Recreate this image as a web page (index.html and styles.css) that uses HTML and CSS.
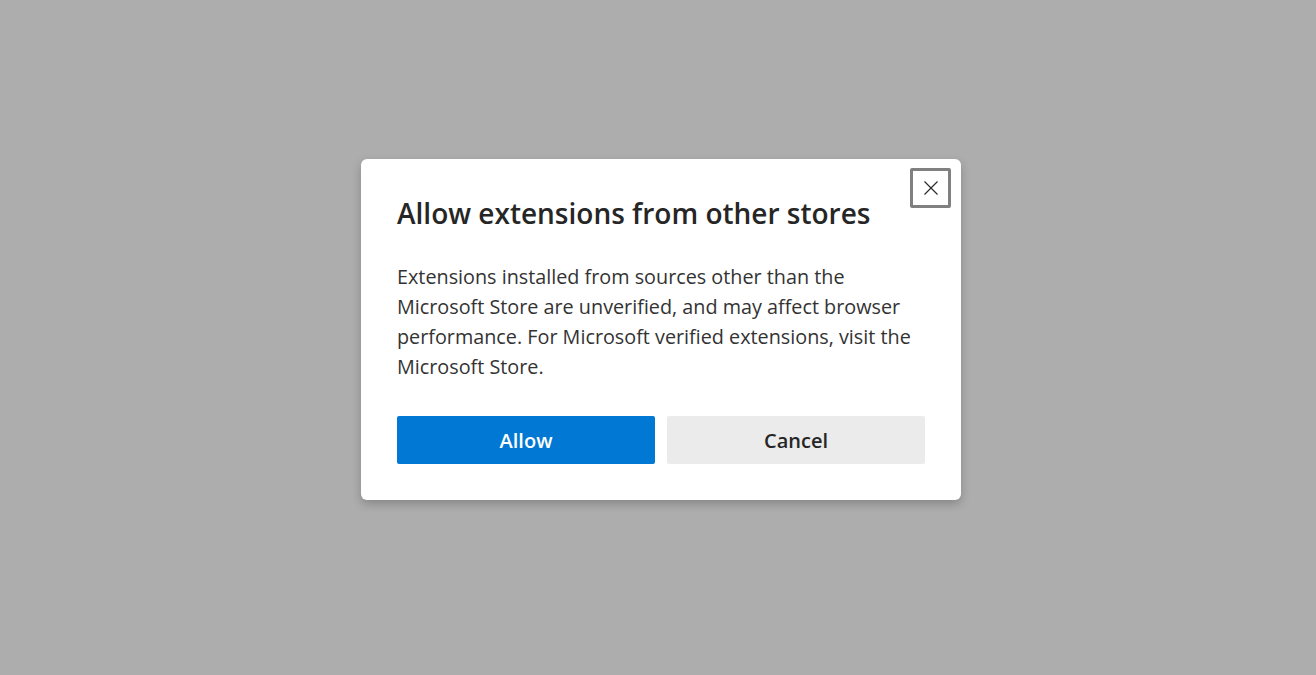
FILE: index.html
```html
<!DOCTYPE html>
<html lang="en">

<head>
    <meta charset="utf-8">
    <meta name="viewport" content="width=device-width, initial-scale=1.0">
    <title>Allow extensions from other stores</title>
    <link rel="stylesheet" href="styles.css">
</head>

<body>
    <div class="dialog" role="dialog" aria-labelledby="titel">
        <button class="luk" aria-label="Close">
            <svg width="16" height="16" viewBox="0 0 16 16">
                <path d="M1.5 1.5 L14.5 14.5 M14.5 1.5 L1.5 14.5" stroke="#2b2b2b" stroke-width="1.2" fill="none" />
            </svg>
        </button>
        <h1 id="titel">Allow extensions from other stores</h1>
        <p class="tekst">Extensions installed from sources other than the Microsoft Store are unverified, and may affect browser performance. For Microsoft verified extensions, visit the Microsoft Store.</p>
        <div class="knapper">
            <button class="knap primaer">Allow</button>
            <button class="knap">Cancel</button>
        </div>
    </div>
</body>

</html>
```

FILE: styles.css
```css
html,
body {
    margin: 0;
    height: 100%;
}

body {
    background-color: #adadad;
    font-family: "Open Sans", "Noto Sans", sans-serif;
    padding-top: 159px;
    padding-left: 361px;
    box-sizing: border-box;
}

.dialog {
    position: relative;
    box-sizing: border-box;
    width: 600px;
    padding: 34px 36px 36px 36px;
    background-color: white;
    border-radius: 6px;
    box-shadow: 0 4px 10px rgba(0, 0, 0, 0.22);
}

.luk {
    position: absolute;
    top: 9px;
    right: 10px;
    width: 41px;
    height: 40px;
    padding: 0;
    display: flex;
    align-items: center;
    justify-content: center;
    background: white;
    border: 3px solid #808080;
    border-radius: 2px;
}

h1 {
    margin: 0;
    font-size: 28px;
    font-weight: 600;
    color: #262626;
    line-height: 40px;
}

.tekst {
    margin: 29px 0 0 0;
    font-size: 19.8px;
    line-height: 30px;
    color: #333;
}

.knapper {
    display: grid;
    grid-template-columns: 1fr 1fr;
    gap: 12px;
    margin-top: 34px;
}

.knap {
    height: 48px;
    border: none;
    border-radius: 2px;
    background-color: #ebebeb;
    color: #262626;
    font-family: inherit;
    font-size: 20px;
    font-weight: 600;
}

.primaer {
    background-color: #0078d4;
    color: white;
}
```
